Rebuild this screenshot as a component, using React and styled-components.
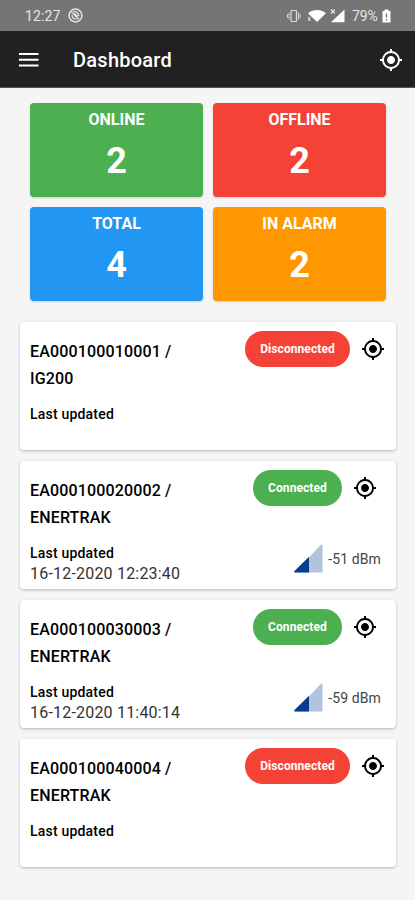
import React from "react";
import styled, { createGlobalStyle } from "styled-components";
import { MdMyLocation } from "react-icons/md";

const GlobalStyle = createGlobalStyle`
  * { box-sizing: border-box; }
  body { margin: 0; background: #f5f5f5; font-family: Roboto, sans-serif; color: #111; }
`;

const Screen = styled.div`
  width: 415px;
  height: 900px;
  display: flex;
  flex-direction: column;
  overflow: hidden;
  background: #f5f5f5;
`;

const StatusBar = styled.div`
  height: 31px;
  flex: none;
  display: flex;
  align-items: center;
  justify-content: space-between;
  padding: 0 24px 0 25px;
  background: #757575;
  color: #e6e6e6;
  font-size: 14px;
`;

const StatusGroup = styled.div`
  display: flex;
  align-items: center;
  svg { display: block; }
`;

const Clock = styled.span`
  width: 43px;
  letter-spacing: 0.1px;
`;

const Battery = styled.span`
  width: 30px;
  margin-left: 6px;
  font-size: 14px;
  letter-spacing: -0.1px;
`;

const AppBar = styled.header`
  height: 57px;
  flex: none;
  display: flex;
  align-items: center;
  padding: 1px 12px 0 19px;
  background: #212121;
  border-bottom: 1px solid #555;
  color: #fff;
`;

const Title = styled.h1`
  flex: 1;
  margin: 0 0 0 34px;
  font-size: 20px;
  font-weight: 500;
  letter-spacing: 0.25px;
`;

const Summary = styled.section`
  display: grid;
  grid-template-columns: 173px 173px;
  grid-auto-rows: 94px;
  gap: 10px;
  padding: 15px 30px 0;
`;

const Tile = styled.div`
  display: flex;
  flex-direction: column;
  align-items: center;
  padding-top: 7px;
  border-radius: 4px;
  background: ${(p) => p.$color};
  color: #fff;
  font-weight: 700;
  box-shadow: 0 1px 2px rgba(0, 0, 0, 0.16);
`;

const TileLabel = styled.span`
  font-size: 16px;
  line-height: 20px;
`;

const TileValue = styled.span`
  margin-top: 11px;
  font-size: 36px;
  line-height: 40px;
`;

const DeviceList = styled.section`
  display: flex;
  flex-direction: column;
  gap: 11px;
  padding: 21px 19px 0 20px;
`;

const Card = styled.article`
  height: 128px;
  display: flex;
  justify-content: space-between;
  padding: 16px 0 0 10px;
  border-radius: 4px;
  background: #fff;
  box-shadow: 0 1px 3px rgba(0, 0, 0, 0.26);
`;

const Info = styled.div`
  width: 170px;
`;

const DeviceName = styled.h2`
  margin: 0;
  font-size: 16px;
  line-height: 27px;
  font-weight: 500;
  letter-spacing: 0.15px;
  color: #000;
`;

const UpdatedLabel = styled.div`
  margin-top: 12px;
  font-size: 14px;
  line-height: 21px;
  font-weight: 500;
  letter-spacing: 0.2px;
  color: #000;
`;

const UpdatedTime = styled.div`
  font-size: 16px;
  line-height: 20px;
  letter-spacing: 0.2px;
  color: #333;
  white-space: nowrap;
`;

const State = styled.div`
  width: 162px;
  margin-top: -7px;
  display: flex;
  flex-direction: column;
  justify-content: space-between;
  padding-bottom: 16px;
`;

const StateRow = styled.div`
  display: flex;
  align-items: center;
  justify-content: center;
  gap: 11px;
  color: #000;
`;

const Pill = styled.span`
  height: 35.5px;
  padding: 0 15px;
  border-radius: 18px;
  background: ${(p) => (p.$online ? "#4caf50" : "#f44336")};
  color: #fff;
  font-size: 12px;
  line-height: 37px;
  font-weight: 700;
  letter-spacing: 0.08px;
`;

const Signal = styled.div`
  display: flex;
  align-items: center;
  justify-content: flex-end;
  gap: 5px;
  padding-right: 15px;
  font-size: 14px;
  line-height: 28px;
  letter-spacing: 0.12px;
  color: #444;
  svg { display: block; }
`;

const tiles = [
  ["ONLINE", 2, "#4caf50"],
  ["OFFLINE", 2, "#f44336"],
  ["TOTAL", 4, "#2196f3"],
  ["IN ALARM", 2, "#ff9800"],
];

const devices = [
  { id: "EA000100010001", model: "IG200" },
  { id: "EA000100020002", model: "ENERTRAK", time: "16-12-2020 12:23:40", signal: -51 },
  { id: "EA000100030003", model: "ENERTRAK", time: "16-12-2020 11:40:14", signal: -59 },
  { id: "EA000100040004", model: "ENERTRAK" },
];

const MutedIcon = () => (
  <svg width="15" height="15" viewBox="0 0 15 15" fill="none" stroke="#e6e6e6">
    <circle cx="7.5" cy="7.5" r="6.4" strokeWidth="1.5" />
    <path d="M3.5 4.2l7.4 7M5.2 3.8c2.8-.8 5.6 1 5.7 4.4M4 7.2c.3 2.8 2 4 4.6 4M6.5 5.5l3.2 3" strokeWidth="1.3" />
  </svg>
);

const StatusIcons = () => (
  <svg width="59" height="16" viewBox="0 0 59 16">
    <g fill="none" stroke="#dcdcdc">
      <rect x="4" y="2.5" width="5.5" height="11" rx="0.8" strokeWidth="1.2" />
      <path d="M2 4.5v7M11.5 4.5v7M.5 6v4M13 6v4" strokeWidth="0.9" />
    </g>
    <path d="M21 5.3C26.5.9 33.5.9 39 5.3L30 14z" fill="#fff" />
    <path d="M21 9l2.5 4M23.5 9L21 13" stroke="#e6e6e6" fill="none" />
    <path d="M44 14.2L57.5 1.5v12.7z" fill="#fff" />
    <path d="M44 1.5l3.8 4M47.8 1.5L44 5.5" stroke="#e6e6e6" strokeWidth="1.2" fill="none" />
  </svg>
);

const BatteryIcon = () => (
  <svg width="9" height="14" viewBox="0 0 9 14">
    <path d="M.5 2h2V.5h4V2h2v11.5h-8z" fill="#fff" />
    <path d="M4.5 4.5v4M4.5 10v1.5" stroke="#757575" strokeWidth="1.3" />
  </svg>
);

const MenuIcon = () => (
  <svg width="20" height="16" viewBox="0 0 20 16" fill="#fff">
    <path d="M0 .9h19.5v2H0zM0 6.8h19.5v2H0zM0 12.6h19.5v2H0z" />
  </svg>
);

const SignalIcon = () => (
  <svg width="29" height="29" viewBox="0 0 29 29">
    <path d="M1 28.5L26.8.8Q28.5 0 28.5 2v25.5q0 1-1 1z" fill="#b0c4de" />
    <path d="M1 28.5Q-.5 28 .5 27L15 12.8v15.7z" fill="#083d8c" />
  </svg>
);

export default function App() {
  return (
    <Screen>
      <GlobalStyle />
      <StatusBar>
        <StatusGroup>
          <Clock>12:27</Clock>
          <MutedIcon />
        </StatusGroup>
        <StatusGroup>
          <StatusIcons />
          <Battery>79%</Battery>
          <BatteryIcon />
        </StatusGroup>
      </StatusBar>
      <AppBar>
        <MenuIcon />
        <Title>Dashboard</Title>
        <MdMyLocation size={24} />
      </AppBar>
      <Summary>
        {tiles.map(([label, value, color]) => (
          <Tile key={label} $color={color}>
            <TileLabel>{label}</TileLabel>
            <TileValue>{value}</TileValue>
          </Tile>
        ))}
      </Summary>
      <DeviceList>
        {devices.map((d) => (
          <Card key={d.id}>
            <Info>
              <DeviceName>
                {d.id} /<br />
                {d.model}
              </DeviceName>
              <UpdatedLabel>Last updated</UpdatedLabel>
              {d.time && <UpdatedTime>{d.time}</UpdatedTime>}
            </Info>
            <State>
              <StateRow>
                <Pill $online={Boolean(d.signal)}>{d.signal ? "Connected" : "Disconnected"}</Pill>
                <MdMyLocation size={24} />
              </StateRow>
              {d.signal && (
                <Signal>
                  <SignalIcon />
                  <span>{d.signal} dBm</span>
                </Signal>
              )}
            </State>
          </Card>
        ))}
      </DeviceList>
    </Screen>
  );
}
